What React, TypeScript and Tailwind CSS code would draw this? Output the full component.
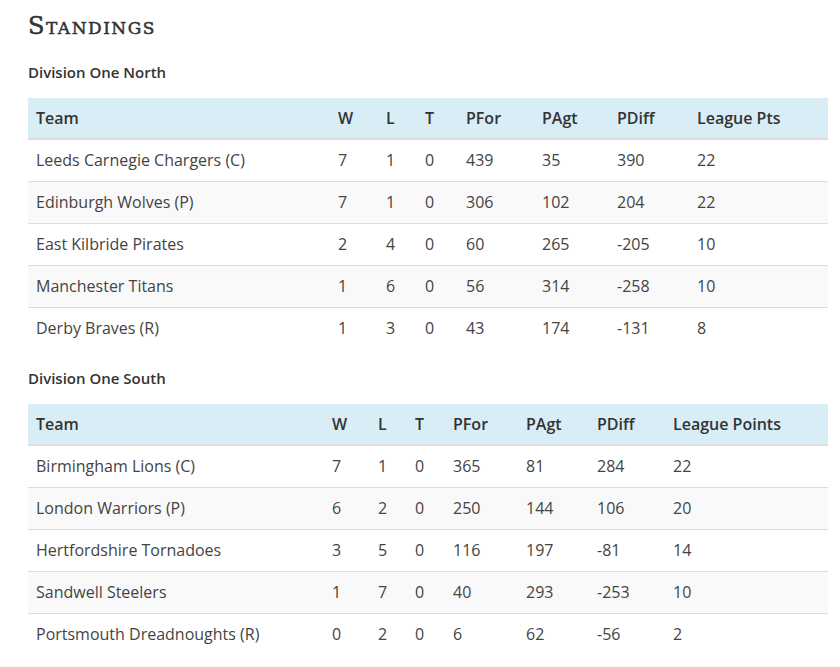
type Row = [string, number, number, number, number, number, number, number]

const north: Row[] = [
  ['Leeds Carnegie Chargers (C)', 7, 1, 0, 439, 35, 390, 22],
  ['Edinburgh Wolves (P)', 7, 1, 0, 306, 102, 204, 22],
  ['East Kilbride Pirates', 2, 4, 0, 60, 265, -205, 10],
  ['Manchester Titans', 1, 6, 0, 56, 314, -258, 10],
  ['Derby Braves (R)', 1, 3, 0, 43, 174, -131, 8],
]

const south: Row[] = [
  ['Birmingham Lions (C)', 7, 1, 0, 365, 81, 284, 22],
  ['London Warriors (P)', 6, 2, 0, 250, 144, 106, 20],
  ['Hertfordshire Tornadoes', 3, 5, 0, 116, 197, -81, 14],
  ['Sandwell Steelers', 1, 7, 0, 40, 293, -253, 10],
  ['Portsmouth Dreadnoughts (R)', 0, 2, 0, 6, 62, -56, 2],
]

function Standings({ title, rows, widths, last }: { title: string; rows: Row[]; widths: number[]; last: string }) {
  const heads = ['Team', 'W', 'L', 'T', 'PFor', 'PAgt', 'PDiff', last]
  return (
    <section>
      <h3 className="mb-4 text-[15px] leading-5 font-semibold text-[#333]">{title}</h3>
      <table className="w-[800px] table-fixed border-collapse text-[16px] text-[#444]">
        <colgroup>
          {widths.map((w, i) => (
            <col key={i} style={{ width: w }} />
          ))}
        </colgroup>
        <thead>
          <tr className="bg-[#d9edf7]">
            {heads.map(h => (
              <th key={h} className="h-[41px] border-b-2 border-[#dddddd] px-2 text-left font-semibold text-[#333]">
                {h}
              </th>
            ))}
          </tr>
        </thead>
        <tbody>
          {rows.map((r, i) => (
            <tr key={r[0]} className={i % 2 === 1 ? 'bg-[#f9f9f9]' : 'bg-white'}>
              {r.map((c, j) => (
                <td key={j} className={`h-[42px] px-2 ${i > 0 ? 'border-t border-[#dddddd]' : ''}`}>
                  {c}
                </td>
              ))}
            </tr>
          ))}
        </tbody>
      </table>
    </section>
  )
}

export default function App() {
  return (
    <div className="min-h-[667px] bg-white px-[28px] pt-[12px] font-['Open_Sans',sans-serif]">
      <h2 className="mb-[22px] font-['DejaVu_Serif',serif] text-[24px] leading-[28px] font-normal tracking-[1.5px] text-[#333] [font-variant:small-caps] [-webkit-text-stroke:0.5px_#333]">
        Standings
      </h2>
      <div className="flex flex-col gap-[19px]">
        <Standings title="Division One North" rows={north} widths={[302, 48, 39, 41, 76, 75, 80, 139]} last="League Pts" />
        <Standings title="Division One South" rows={south} widths={[296, 46, 37, 38, 73, 71, 76, 163]} last="League Points" />
      </div>
    </div>
  )
}
